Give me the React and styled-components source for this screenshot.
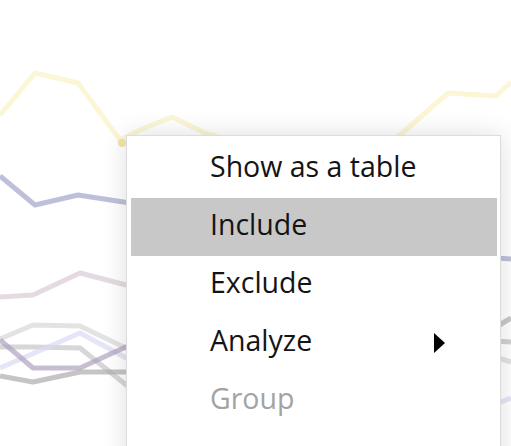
import React from "react";
import styled, { createGlobalStyle } from "styled-components";

const GlobalStyle = createGlobalStyle`
  html, body {
    margin: 0;
    padding: 0;
    background: #ffffff;
  }
  body {
    width: 511px;
    height: 446px;
    overflow: hidden;
    font-family: "Open Sans", "Noto Sans", sans-serif;
  }
`;

const Page = styled.div`
  position: relative;
  width: 511px;
  height: 446px;
  overflow: hidden;
  background: #ffffff;
`;

const Chart = styled.svg`
  display: block;
  width: 511px;
  height: 446px;
  filter: blur(0.7px);
`;

const Menu = styled.ul`
  position: absolute;
  left: 126px;
  top: 135px;
  width: 366px;
  margin: 0;
  padding: 4px 3px 4px 4px;
  list-style: none;
  background: #ffffff;
  border: 1px solid #dcdcdc;
  box-shadow: 0 0 24px rgba(0, 0, 0, 0.13);
`;

const Item = styled.li`
  display: flex;
  align-items: center;
  justify-content: space-between;
  box-sizing: border-box;
  height: 58px;
  padding: 0 52px 5px 79px;
  font-size: 28.5px;
  line-height: 1;
  color: ${(p) => (p.$disabled ? "#a3a3a3" : "#141414")};
  background: ${(p) => (p.$active ? "#c8c8c8" : "transparent")};
  white-space: nowrap;
`;

const Caret = styled.span`
  width: 0;
  height: 0;
  margin-top: 4px;
  border-top: 10px solid transparent;
  border-bottom: 10px solid transparent;
  border-left: 11px solid #000000;
`;

const lines = [
  { c: "#f8f0bb", o: 0.6, p: "0,115 35,73 78,83 120,140 140,130 172,117 205,133 260,150" },
  { c: "#f8f0bb", o: 0.6, p: "380,150 400,135 448,93 496,96 511,82" },
  { c: "#a5a7cc", o: 0.72, p: "0,176 35,205 78,195 130,203 200,210" },
  { c: "#a5a7cc", o: 0.72, p: "450,255 511,259" },
  { c: "#dccbd5", o: 0.7, p: "0,297 33,295 80,273 130,286" },
  { c: "#d4d4d4", o: 0.65, p: "0,339 33,325 80,326 130,350" },
  { c: "#c2c2c2", o: 0.65, p: "0,347 33,347 80,348 130,388" },
  { c: "#d9dcf3", o: 0.7, p: "0,368 80,333 130,360" },
  { c: "#ae9fc0", o: 0.68, p: "0,340 33,368 80,368 130,345" },
  { c: "#aeaeae", o: 0.72, p: "0,376 33,382 80,372 130,372" },
  { c: "#ababab", o: 0.65, p: "480,337 511,318" },
  { c: "#b8b8b8", o: 0.65, p: "480,340 511,342" },
  { c: "#d4d4d4", o: 0.65, p: "480,352 511,362" },
  { c: "#d9dcf3", o: 0.7, p: "480,410 511,398" },
];

const items = [
  { label: "Show as a table" },
  { label: "Include", active: true },
  { label: "Exclude" },
  { label: "Analyze", sub: true },
  { label: "Group", disabled: true },
  { label: "Summarize" },
];

export default function App() {
  return (
    <Page>
      <GlobalStyle />
      <Chart viewBox="0 0 511 446">
        {lines.map((l, i) => (
          <polyline
            key={i}
            points={l.p}
            fill="none"
            stroke={l.c}
            strokeOpacity={l.o}
            strokeWidth="5"
            strokeLinejoin="round"
          />
        ))}
        <circle cx="122" cy="143" r="4" fill="#eedc8e" opacity="0.75" />
      </Chart>
      <Menu>
        {items.map((it) => (
          <Item key={it.label} $active={it.active} $disabled={it.disabled}>
            <span>{it.label}</span>
            {it.sub && <Caret />}
          </Item>
        ))}
      </Menu>
    </Page>
  );
}
